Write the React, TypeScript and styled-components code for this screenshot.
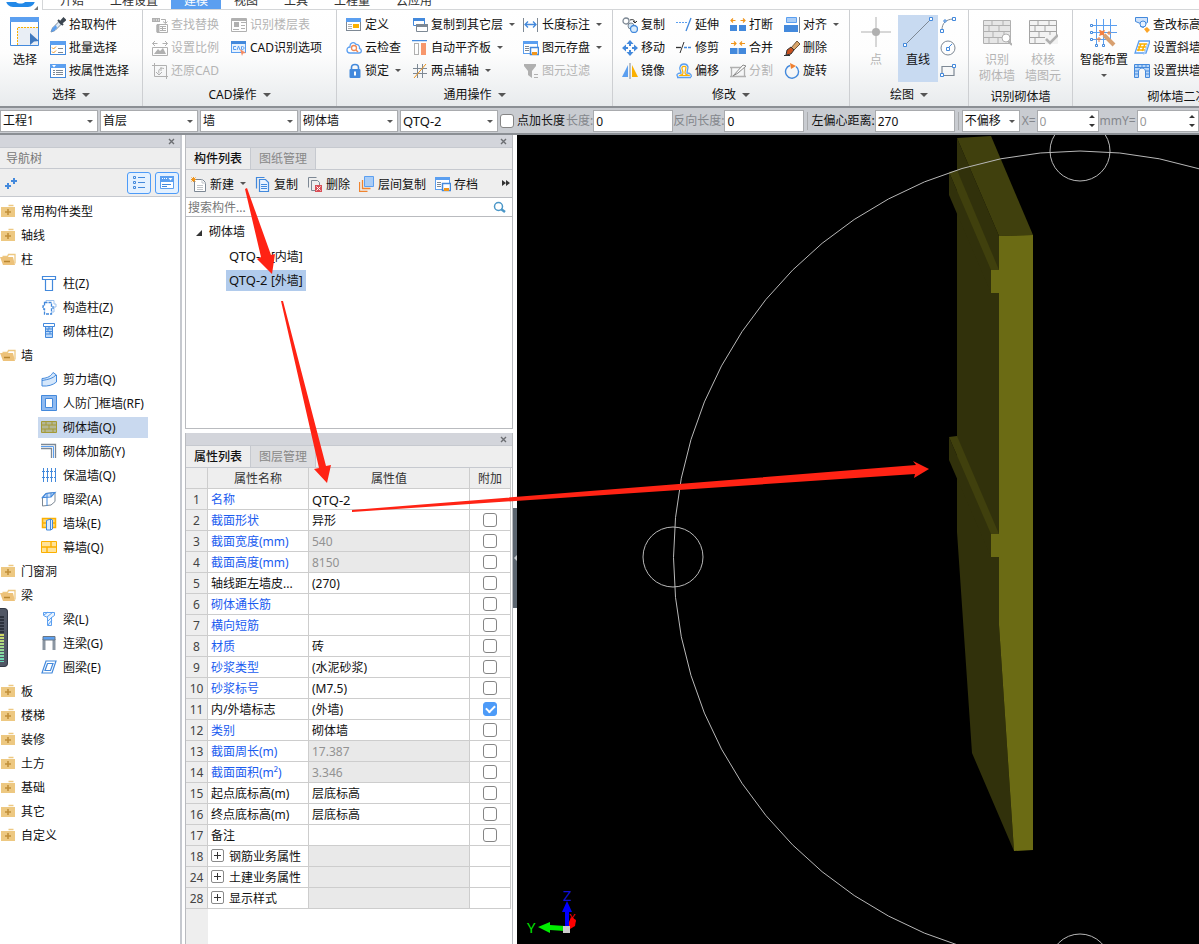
import React from 'react';
import styled, { createGlobalStyle, css } from 'styled-components';

const GlobalStyle = createGlobalStyle`
  * { box-sizing: border-box; }
  html, body { margin: 0; background: #fff; }
  body, button, input, select, table {
    font-family: "Noto Sans", "Noto Sans CJK SC", sans-serif;
    font-size: 12px;
    line-height: 16px;
    color: #111;
  }
  button { border: 0; background: none; padding: 0; margin: 0; text-align: left; white-space: nowrap; }
  input, select { margin: 0; border-radius: 0; }
`;

const B = '#4389dc';
const L = '#5b9ff0';
const P = '#cfe2fa';
const G = '#b0b0b0';
const D = '#7d8894';
const O = '#f0951c';
const Y = '#fbb000';

/* ---------- icons ---------- */

const s = (c: string, w = 1) => ({ fill: 'none', stroke: c, strokeWidth: w });

const icons: Record<string, React.ReactNode> = {
  pick: <><path d="M1 15l1.500-4L9 4.500 11.500 7 5 13.500z" fill="#dfeaf5" stroke={D} /><path d="M1 15l1.500-4L6 8l1 3-3 3z" fill={L} /><path d="M8 3l5 5M10 5.500l3.500-4 1.500 1.500-4 3.500z" stroke="#3c4650" strokeWidth="2" fill="#3c4650" /></>,
  batch: <><rect x=".5" y="1.500" width="15" height="13" fill="#fff" stroke={B} /><path d="M0 1h16v4H0z" fill={L} /><path d="M2 7.500l1.500 1.500L6 6.500M2 11.500L3.500 13 6 10.500" {...s(O)} /><path d="M8 8.500h5M8 12.500h5" {...s(D)} /></>,
  prop: <><rect x=".5" y="1.500" width="15" height="13" fill="#fff" stroke={B} /><path d="M0 1h16v4H0z" fill={L} /><path d="M2 2h4L4 4.500z" fill="#fff" /><path d="M3 7.500h2M6 7.500h7M3 9.500h2M6 9.500h7M3 11.500h2M6 11.500h7" {...s(D)} /></>,
  replace: <><path d="M0 1h8v4H0z" fill={G} /><path d="M1.500 3h1M4 3h1M6 3h1" stroke="#fff" /><path d="M9 2.500h4.500V6M11 4.500l2.500 2 2-2" {...s(G)} /><path d="M5 7.500h10.500v8H5z" {...s(G)} /><path d="M5 8h2v7H5zM8 9.500h6M8 11.500h6M8 13.500h6M10.500 9v5" fill={G} stroke={G} /></>,
  scale: <><path d="M.5 3.500h5M3 1L.5 3.500 3 6M15.500 3.500h-5M13 1l2.500 2.500L13 6M.5 7.500h15v8H.500z" {...s(G)} /><path d="M2 14l4-5 2 2 3-3 3 6z" fill={G} /></>,
  restore: <><path d="M2.500 0v13.500H16M0 2.500h14.500V16M12 5.500c-4-1-6 1-5 5M4 9l3 3 3-3M9 4v4" {...s(G)} /></>,
  floorTable: <><path d="M.5 1.500h15v13H.500zM10 5.500h5M10 8.500h4M10 11.500h4M2 12.500h6" {...s(G)} /><path d="M1 2h14v2H1zM3 5h5v5H3z" fill={G} /></>,
  cadOpt: <><rect x=".5" y="1.500" width="14" height="11" fill="#e8f2fd" stroke={L} /><path d="M0 1h15v3H0z" fill={B} /><path d="M5 6.500H2.500v3H5M6 10l1.500-4L9 10M10.500 6.500v3h1c2 0 2-3 0-3z" {...s(L)} /><path d="M9 9l6 4-3 .5L11 16z" fill="#f58b63" /></>,
  define: <><rect x=".5" y="1.500" width="14" height="12" fill="#fff" stroke={D} /><path d="M0 1h15v4H0z" fill={L} /><path d="M2 7.500h4M2 9.500h4M2 11.500h4" {...s(G)} /><path d="M7 7h6v4H7z" fill={Y} /></>,
  cloud: <><path d="M4 13h9c3 0 3-4 .5-4.500C14 5 11 4 10 4.500 8 1 3.500 3 4 7c-4 0-4 6 0 6z" fill="#fff" stroke={L} strokeWidth="1.300" /><circle cx="8" cy="8" r="2.500" {...s('#ee8855', 1.3)} /><path d="M10 10l2 2" stroke="#ee8855" strokeWidth="1.500" /></>,
  lock: <><path d="M5.500 7V4.500c0-4 7-4 7 0V7" {...s(B, 1.6)} /><rect x="3.500" y="6" width="11" height="9" rx="1" fill={B} /><path d="M9 8.500v4" stroke="#fff" strokeWidth="2" /></>,
  copyFloor: <><path d="M1.500 1.500h11v7h-11z" fill="#fff" stroke={B} /><path d="M1 1h12v3H1z" fill={B} /><path d="M4.500 7.500h11v7h-11z" fill="#fff" stroke={D} /><path d="M4 7h12v3H4z" fill={D} /></>,
  flat: <><path d="M0 .5h15" stroke={B} strokeWidth="1.500" /><rect x="2.500" y="3.500" width="4" height="11" {...s(G)} /><rect x="9" y="3" width="5" height="12" fill="#f7976c" /></>,
  aux: <><path d="M5.500 1v14M10.500 1v14M1 5.500h14M1 10.500h14" {...s(D)} /><path d="M2 15L14 1" stroke={O} /></>,
  length: <><path d="M.5 1v14M14.500 1v14" {...s(D)} /><path d="M2 7.500h11M5 4.500l-3 3 3 3M10 4.500l3 3-3 3" {...s(B, 1.3)} /></>,
  save: <><rect x=".5" y="1.500" width="14" height="12" fill="#fff" stroke={L} /><path d="M0 1h15v3H0z" fill={L} /><path d="M2 6.500h4M2 8.500h4M2 10.500h4" {...s(D)} /><path d="M7.500 7.500h8v7h-8z" fill="#fff" stroke={B} strokeWidth="1.500" /><path d="M9 12h5v3H9z" fill={O} /></>,
  filter: <><path d="M1 1h12v2L9 8v7l-4-3V8L1 3z" fill={G} /><path d="M11 11.500h4M11 14.500h4" {...s(G)} /></>,
  copy: <><circle cx="4" cy="4" r="3" fill="#fff" stroke={D} strokeWidth="1.300" /><path d="M8 3c3-1 5 0 5 3M11 4l2 2 2-2" {...s('#333')} /><circle cx="9" cy="9" r="3" fill="#cfe5f8" stroke={D} /><circle cx="12" cy="12" r="3.500" fill="#d8ebfb" stroke={B} strokeWidth="1.300" /></>,
  move: <><path d="M8 0l3.500 4h-2.500v2h-2V4H4.500zM8 16l3.500-4h-2.500v-2h-2v2H4.500zM0 8l4-3.500v2.500h2v2H4v2.500zM16 8l-4-3.500v2.500h-2v2h2v2.500z" fill={B} /></>,
  mirror: <><path d="M6 2v12H0z" fill={L} /><path d="M10 2v12h6z" fill={Y} /><path d="M8 0v16" {...s(D)} /></>,
  extend: <><path d="M0 5.500h11" stroke={L} strokeDasharray="2 1" /><path d="M15 1l-5 13" {...s(B, 1.3)} /></>,
  trim: <><path d="M0 7.500h5" {...s('#333', 1.3)} /><path d="M8 7.500h8" stroke={B} strokeDasharray="3 1" strokeWidth="1.500" /><path d="M8 2L4 13" {...s('#333')} /></>,
  offset: <><path d="M1 14.500h14M2 14c-2-2-1-4 3-4 0-2-2-4-1-6 1-4 7-4 8 0 0 2-1 4-1 6 3 0 5 2 4 4" {...s(L, 1.3)} /><path d="M4 12.500c1-1 3 0 3-2.500S5.500 6 6 4.500c1-2 4-1 4 0S9 8 9 10s3 1.500 4 2.500z" {...s(Y, 1.2)} /></>,
  break: <><path d="M0 8h7v6H0zM9 8h7v6H9z" fill={B} /><path d="M5.500 3.500H1M3 1.500l-2 2 2 2M10.500 3.500H15M13 1.500l2 2-2 2" {...s(O, 1.2)} /></>,
  merge: <><path d="M0 8h16v6H0z" fill={B} /><path d="M8 8v6" stroke="#fff" /><path d="M1 3.500h5M4 1.500l2 2-2 2M15 3.500h-5M12 1.500l-2 2 2 2" {...s(O, 1.2)} /></>,
  split: <><path d="M1.500 4.500h13v9h-13zM0 4.500h4M0 13.500h16" {...s(G, 1.3)} /><path d="M3 13L13 2l3 1L8 10z" fill="#fff" stroke="#8a8a8a" /></>,
  align: <><path d="M2.500.5h10v5h-10z" fill="#a9cdf7" stroke={L} /><path d="M0 8h14v7H0z" fill={B} /><path d="M15.500 0v16" {...s(D)} /></>,
  erase: <><path d="M7 8l6-7 3 3-6 6z" fill="#d9a56b" stroke="#70563a" /><path d="M3 10l4-3 3 3-3 4-5 1z" fill="#c8501e" stroke="#333" /><path d="M0 15.500h6" {...s('#333')} /></>,
  rotate: <><path d="M12 3.500A6.500 6.500 0 1 1 6 2.500" {...s(B, 1.4)} /><path d="M6 0l6 3-5 3z" fill="#f08030" /></>,
  arc: <><path d="M2 13C2 6 6 2.500 13 2" {...s(D)} /><path d="M.5 12.500h3v3h-3zM12.500.5h3v3h-3zM4 3h2v2H4z" fill="#fff" stroke={B} /></>,
  circle: <><circle cx="8" cy="8" r="7" {...s(D)} /><path d="M8 8l4-4" {...s(B)} /><path d="M6.500 7.500h3v3h-3z" fill="#fff" stroke={B} /></>,
  rect: <><path d="M2 3.500h12v9H2z" {...s(D, 1.2)} /><path d="M.5 10.500h3v3h-3zM12.500 1.500h3v3h-3z" fill="#fff" stroke={B} /></>,
  elev: <><path d="M1.500.5h12v5l-4 2v3l-3-1v-3l-5-2z" fill={P} stroke={B} /><circle cx="9" cy="7" r="3" fill="#e4f0ff" stroke={B} /><path d="M10 12l3-2 3 3-3 3z" fill="#fba528" /></>,
  slant: <><path d="M5 1h11l-4 12H1z" fill="#fff" stroke={L} strokeWidth="1.300" /><path d="M5 4h8M4 7h8M3 10h8M7 4L4 11M11 4L8 11" stroke={Y} strokeWidth="1.500" /><path d="M13 4l2-2-4 12-2 1" fill="#a9cdf7" /></>,
  arch: <><path d="M.5 1.500h15v13h-4V8c-1-4-6-4-7 0v6.500h-4z" fill="#b7d5f8" stroke={B} /><path d="M1 4.500h14M4 1v3M8 1v3M12 1v3M1 8h3M12 8h3M1 11h3M12 11h3" {...s(B)} /></>,
  folderPlus: <><path d="M8.500 2.500h5" stroke="#edc881" strokeWidth="1.500" /><path d="M1 4h14v10H1z" fill="#edc881" /><path d="M8 6v6M5 9h6" stroke="#c08f3a" strokeWidth="1.600" /></>,
  folderOpen: <><path d="M2.500 5.500h5l1-2h6.500v9" {...s('#edc881', 1.3)} /><path d="M0 6h13l2 8H3z" fill="#edc27a" /><path d="M4 10.500h6" stroke="#b98730" strokeWidth="1.500" /></>,
  column: <><path d="M1.500 1.500h13v3h-13zM4.500 4.500v11h7v-11" fill="#fff" stroke={B} strokeWidth="1.200" /></>,
  structCol: <><path d="M5 3V1.500h8V5h2v3h-2v5h-2" {...s('#9fc3ee')} /><path d="M3.500 3.500h7V7h1.500v3h-1.500v5h-7v-5H2V7h1.500z" fill="#fff" stroke={B} strokeWidth="1.300" strokeDasharray="3 1" /></>,
  brickCol: <><path d="M2.500.5h11v3h-11z" fill="#fff" stroke={B} /><path d="M4.500 3.500h7v11h-7z" fill="#bcd8f8" stroke={B} /><path d="M5 6h6M5 8.500h6M5 11h6M8 4v2M7 6v3M9 9v2" {...s(B)} /></>,
  shearWall: <><path d="M1 7.500C7 7 10 5 12 1.500L15.500 4v7C12 14 7 15.500 1 15z" fill="#d5e7fb" stroke={B} /><path d="M1 9.500c6-1 11-2 14-5.500" {...s(B)} /></>,
  door: <><path d="M.5.5h15v15H.500z" fill="#8fbaf0" stroke={B} /><path d="M4.500 3.500h7v9h-7z" fill="#fff" stroke={B} /></>,
  brick: <><path d="M.5 2.500h15v11H.500z" fill="#b4b795" stroke="#a49a36" /><path d="M1 6h14M1 10h14M5 3v3M11 3v3M8 6v4M4 10v3M12 10v3" {...s('#a49a36')} /></>,
  rebar: <><path d="M0 1.500h14.500V15M0 5.500h10.500V15" {...s(D, 1.3)} /><path d="M0 3.500h12.500V15" {...s(L)} /></>,
  insul: <><path d="M2.500 1v14M6.500 1v14M10.500 1v14M14.500 1v14" {...s(B)} /><path d="M1 4.500h14M1 10.500h14" stroke={B} strokeDasharray="1 1" /></>,
  hidden: <><path d="M1.500 6.500L5 2.500l9-1v9L10 14l-8.500 1z" fill="#fff" stroke={D} /><path d="M1.500 6.500L5 2.500l9-1L10 6z" fill={P} stroke={B} strokeWidth="1.200" /><path d="M6 2.500v4M10 2v4M6 6.500V15" {...s(B)} /></>,
  pier: <><path d="M1.500 3.500h13v9h-13z" fill="#ffd978" stroke={Y} strokeWidth="1.500" /><path d="M2 8h12" stroke={Y} strokeWidth="1.500" /><path d="M5.500 5.500l4-1.500 2 1v9l-2 1h-4z" fill="#dcecff" stroke={B} /><path d="M9.500 4v11" {...s(B)} /></>,
  curtain: <><path d="M.5 2.500h15v11H.500z" fill="#ffe39a" stroke={Y} /><path d="M1 8h14M10 3v5M6 8v5" stroke={Y} strokeWidth="1.400" /></>,
  beam: <><path d="M2.500 1.500h11v3l-3 2v8h-4v-8l-4-2z" fill="#e8f3ff" stroke={L} /><path d="M3 4l4-3M6 6l6-5M7 14l4-5M7 10l4-4" {...s(L)} /></>,
  linkBeam: <><path d="M3 4v11M13 4v11" stroke="#8b96a2" strokeWidth="3" /><path d="M2 1.500h12V5H2z" fill={L} stroke="#6c7681" /></>,
  ringBeam: <path d="M5 2h10l-4 12H1zM6.500 4.500L4 11.500h5.500l2.500-7z" fill="#fff" stroke={B} strokeWidth="1.200" />,
  newDoc: <><path d="M3.500 3.500h8l3 3v9h-11z" fill="#fff" stroke={D} /><path d="M11 3v4h4M6 9.500h6M6 11.500h6M6 13.500h6" {...s('#c0c4c8')} /><path d="M.5 1.500l4 4M4.500 1.500l-4 4M2.500 1v5M0 3.500h5" stroke={O} /></>,
  copyDoc: <><path d="M1.500 12.500v-11h8" {...s(B, 1.2)} /><path d="M4.500 3.500h6l3 3v9h-9z" fill="#e8f3ff" stroke={B} strokeWidth="1.200" /><path d="M6 8.500h6M6 10.500h6M6 12.500h6" {...s(B)} /></>,
  delDoc: <><path d="M1.500 11.500v-10h8M4.500 4.500h6l2 2v8h-8z" {...s(D)} /><path d="M8 9h7v7H8z" fill="#d94f57" /><path d="M9.500 10.500l4 4M13.500 10.500l-4 4" stroke="#fff" /></>,
  layerCopy: <><path d="M.5 6v9.500h8M3.500 4v8.500h8" {...s('#ef8430', 1.3)} /><path d="M5.500.5h9v10h-9z" fill="#a9cdf7" stroke={L} /></>,
  search: <><circle cx="6.500" cy="7.500" r="4" {...s('#4b97c8', 1.5)} /><path d="M9 10l4 3" stroke="#4b97c8" strokeWidth="2.500" /></>,
  sort: <path d="M5 8v6M2 11h6M11 3v6M8 6h6" stroke={B} strokeWidth="2" />,
  list: <><path d="M2.500 1.500h2v2h-2zM2.500 6.500h2v2h-2zM2.500 11.500h2v2h-2zM7 2.500h7M7 7.500h7M7 12.500h7" {...s(B)} /></>,
  card: <><path d="M1.500 2.500h13v11h-13z" fill="#fff" stroke={L} /><path d="M1 1h14v6H1z" fill={L} /><path d="M3 9.500h9M3 11.500h5" {...s(B)} /><path d="M9.500 3h4l-2 2.500z" fill="#fff" /><path d="M3 3.500h1M5 3.500h1M7 3.500h1" stroke="#fff" /></>,
};

const bigIcons: Record<string, React.ReactNode> = {
  select: <><path d="M.500.5h28v28H.500z" fill="#fff" stroke={B} /><path d="M0 0h29v5H0z" fill={L} /><path d="M7 10h21v18H7z" fill="#e9eef5" /><path d="M7.500 28V10.500H28" stroke={Y} fill="none" strokeDasharray="2 1" /><path d="M20 16l9 8-5 .5-4 3.500z" fill="#3f78be" /></>,
  point: <><path d="M15 0v30M0 15h30" {...s(G)} /><circle cx="15" cy="15" r="4" fill={G} /></>,
  line: <><path d="M3 27L27 3" {...s(D)} /><path d="M.5 26.500h3v3h-3zM26.500.5h3v3h-3z" fill="#fff" stroke={B} /></>,
  wallScan: <><path d="M1.500 3.500h27v23h-27z" fill="#e6e6e6" stroke={G} /><path d="M2 8.500h26M2 14.500h26M2 20.500h26M10 4v4M21 4v4M7 9v5M17 9v5M11 15v5M22 15v5M7 21v5M16 21v5" {...s(G)} /><circle cx="24" cy="21" r="4" fill="#fff" stroke={G} /><path d="M26 24l4 4" stroke={G} strokeWidth="2" /></>,
  wallCheck: <><path d="M1.500 3.500h27v23h-27z" fill="#f3f3f3" stroke="#a4a4a4" /><path d="M2 8.500h26M2 14.500h26M2 20.500h26M10 4v4M21 4v4M7 9v5M17 9v5M11 15v5M22 15v5M7 21v5" {...s('#a4a4a4')} /><path d="M17 18h13v9H17z" fill="#f3f3f3" /><path d="M18 22l4 4 8-8" {...s(G, 2.5)} /></>,
  smart: <><path d="M7.500 2v27M14.500 2v27M21.500 2v24M28 8.500H1M28 15.500H1M20 22.500H1" {...s(L)} /><path d="M1.500 7.500h2v2h-2zM1.500 14.500h2v2h-2zM1.500 21.500h2v2h-2zM6.500 27.500h2v2h-2zM13.500 27.500h2v2h-2z" fill="#fff" stroke={B} /><path d="M11 13l2 1 3-1-1 3 1 3-3-1-3 1 1-3-1-3z" fill="#f58040" /><path d="M15 18l10 10" stroke="#d8a070" strokeWidth="4" /><path d="M20 14v4M18 16h4M10 20v5M7 22h5" stroke="#f0803a" /></>,
};

const Glyph = styled.svg<{ $size?: number }>`
  width: ${p => p.$size ?? 16}px;
  height: ${p => p.$size ?? 16}px;
  flex: none;
  display: block;
`;
const Icon = ({ name }: { name: string }) => <Glyph viewBox="0 0 16 16" aria-hidden="true">{icons[name]}</Glyph>;
const BigIcon = ({ name }: { name: string }) => <Glyph $size={30} viewBox="0 0 30 30" aria-hidden="true">{bigIcons[name]}</Glyph>;

const Caret = styled.i<{ $big?: boolean }>`
  border: ${p => (p.$big ? 4 : 3)}px solid transparent;
  border-top-color: #555;
  border-bottom-width: 0;
  margin-left: 3px;
  flex: none;
`;
const Label = styled.span` padding-top: 2px; `;
const Code = styled.span` font-size: 13px; `;

/* ---------- ribbon ---------- */

const Page = styled.div`
  display: flex;
  flex-direction: column;
  min-height: 100vh;
  position: relative;
  overflow: hidden;
`;
const MenuBar = styled.header`
  display: flex;
  align-items: flex-end;
  height: 10px;
  overflow: hidden;
`;
const AppMenu = styled.button`
  width: 42px;
  height: 10px;
  flex: none;
`;
const MenuTabs = styled.nav`
  display: flex;
  align-items: flex-end;
  flex: 1;
  padding-left: 4px;
  border-bottom: 1px solid #d4d6d8;
  border-left: 1px solid #d4d6d8;
  height: 10px;
`;
const MenuTab = styled.button<{ $active?: boolean }>`
  padding: 0 13px;
  height: 17px;
  flex: none;
  background: ${p => (p.$active ? L : 'none')};
  color: ${p => (p.$active ? '#fff' : '#333')};
`;
const Ribbon = styled.div`
  display: flex;
  height: 96px;
  overflow: hidden;
  background: linear-gradient(#fff 0%, #fdfdfd 45%, #e8ebed 100%);
`;
const Group = styled.section<{ $w: number }>`
  width: ${p => p.$w}px;
  flex: none;
  display: flex;
  flex-direction: column;
  padding: 3px 0 0;
  border-right: 1px solid #cdcfd2;
`;
const GroupBody = styled.div<{ $pad: number; $gap?: number }>`
  display: flex;
  height: 69px;
  padding-left: ${p => p.$pad}px;
  gap: ${p => p.$gap ?? 0}px;
`;
const GroupTitle = styled.button<{ $low?: boolean }>`
  display: flex;
  align-items: center;
  justify-content: center;
  gap: 3px;
  height: 24px;
  padding-top: ${p => (p.$low ? 6 : 2)}px;
  flex: none;
`;
const Commands = styled.div<{ $cols: string }>`
  display: grid;
  grid-template-columns: ${p => p.$cols};
  grid-template-rows: repeat(3, 23px);
  grid-auto-flow: column;
`;
const Command = styled.button`
  display: flex;
  align-items: center;
  gap: 3px;
  &:disabled { color: #b4b4b4; }
`;
const BigCommand = styled.button<{ $w: number; $active?: boolean }>`
  display: flex;
  flex-direction: column;
  align-items: center;
  width: ${p => p.$w}px;
  flex: none;
  padding-top: 2px;
  height: 67px;
  margin-top: 2px;
  text-align: center;
  background: ${p => (p.$active ? '#c8daf1' : 'none')};
  &:disabled { color: #b4b4b4; }
  svg { margin-bottom: 5px; }
  i { margin: 6px 0 0; }
`;

type Cmd = [icon: string, label: string, caret?: boolean, off?: boolean];
const CommandGrid = ({ cols, items }: { cols: string; items: Cmd[] }) => (
  <Commands $cols={cols}>
    {items.map(([icon, label, caret, off]) => (
      <Command key={label} disabled={off}>
        <Icon name={icon} />{label}{caret && <Caret />}
      </Command>
    ))}
  </Commands>
);

/* ---------- option bar ---------- */

const OptionBar = styled.form`
  display: flex;
  align-items: center;
  height: 29px;
  padding-top: 1px;
  flex: none;
  overflow: hidden;
  background: #c9ccd1;
  border-top: 2px solid #8b8f94;
  border-bottom: 2px solid #8b8f94;
  white-space: nowrap;
`;
const SelectBox = styled.div<{ $w: number; $code?: boolean }>`
  position: relative;
  width: ${p => p.$w}px;
  margin-right: 2px;
  flex: none;
  display: flex;
  align-items: center;
  i { position: absolute; right: 5px; pointer-events: none; }
  select {
    width: 100%;
    height: 22px;
    padding: 0 2px;
    border: 1px solid #a9abae;
    background: #fff;
    appearance: none;
    font-size: ${p => (p.$code ? 13 : 12)}px;
  }
`;
const Field = styled.label<{ $muted?: boolean }>`
  display: flex;
  align-items: center;
  color: ${p => (p.$muted ? '#84878c' : '#111')};
  flex: none;
`;
const CheckField = styled(Field)`
  gap: 3px;
  margin-right: 1px;
`;
const TextInput = styled.input<{ $w: number }>`
  width: ${p => p.$w}px;
  height: 22px;
  padding: 0 2px;
  border: 1px solid #a9abae;
  background: #fff;
  &:disabled { color: #999; }
`;
const Divider = styled.span`
  width: 1px;
  height: 18px;
  margin: 0 3px;
  background: #a9abae;
  flex: none;
`;
const Spin = styled.span`
  position: relative;
  display: flex;
  margin: 0 1px;
  svg { position: absolute; right: 3px; top: 4px; }
`;
const Check = styled.input`
  appearance: none;
  width: 14px;
  height: 14px;
  border: 1px solid #858585;
  border-radius: 3px;
  background: #fff;
  display: inline-flex;
  align-items: center;
  justify-content: center;
  vertical-align: middle;
  flex: none;
  &:checked { background: #4d9bf8; border-color: #4d9bf8; }
  &:checked::after {
    content: '';
    width: 7px;
    height: 4px;
    border: solid #fff;
    border-width: 0 0 2px 2px;
    transform: translateY(-1px) rotate(-45deg);
  }
`;

const Drop = ({ label, w, value, code }: { label: string; w: number; value: string; code?: boolean }) => (
  <SelectBox $w={w} $code={code}><select aria-label={label} defaultValue={value}><option>{value}</option></select><Caret /></SelectBox>
);
const SpinBox = ({ label }: { label: string }) => (
  <Field $muted>{label}
    <Spin><TextInput $w={62} defaultValue="0" disabled />
      <svg width="8" height="14" aria-hidden="true"><path d="M1 4l3-3 3 3zM1 10l3 3 3-3z" fill="#333" /></svg>
    </Spin>
  </Field>
);

/* ---------- panels ---------- */

const Main = styled.main`
  display: flex;
  flex: 1;
`;
const NavPanel = styled.aside`
  position: relative;
  width: 182px;
  flex: none;
  border-right: 2px solid #c6c9cf;
  background: #fff;
`;
const CloseBar = styled.div`
  display: flex;
  justify-content: flex-end;
  align-items: center;
  height: 13px;
  padding-right: 5px;
  background: #d3d5db;
  border-bottom: 1px solid #c6c9cf;
  flex: none;
  button { display: flex; }
`;
const Close = () => (
  <button type="button" aria-label="关闭"><svg width="7" height="7"><path d="M1 1l5 5M6 1L1 6" stroke="#6c6e72" strokeWidth="1.400" /></svg></button>
);
const NavHeading = styled.h2`
  margin: 0;
  padding: 3px 6px 0;
  height: 21px;
  font-size: 12px;
  font-weight: 400;
  color: #777;
  background: #eee;
  border-bottom: 1px solid #c6c9cf;
`;
const NavTools = styled.div`
  display: flex;
  align-items: center;
  gap: 4px;
  height: 28px;
  padding: 0 1px 0 3px;
  background: #eee;
  border-bottom: 1px solid #c6c9cf;
`;
const Spacer = styled.span` flex: 1; `;
const Toggle = styled.button`
  display: flex;
  align-items: center;
  justify-content: center;
  width: 24px;
  height: 22px;
  border: 1px solid #4d9bf8;
  border-radius: 3px;
  background: #e4f1ff;
`;
const Tree = styled.ul`
  list-style: none;
  margin: 0;
  padding: 2px 0 0;
`;
const TreeRow = styled.li`
  height: 24px;
  display: flex;
  align-items: center;
`;
const FolderButton = styled.button`
  display: flex;
  align-items: center;
  gap: 5px;
`;
const LeafButton = styled.button<{ $active?: boolean }>`
  display: flex;
  align-items: center;
  gap: 6px;
  height: 21px;
  min-width: 110px;
  margin-left: 38px;
  padding: 0 3px;
  background: ${p => (p.$active ? '#c9d9ef' : 'none')};
`;
const Meter = styled.div`
  position: absolute;
  left: 0;
  top: 473px;
  width: 8px;
  height: 59px;
  border-radius: 0 4px 4px 0;
  border: 1px solid #333845;
  border-left: 0;
  background: #515765;
  &::before {
    content: '';
    position: absolute;
    left: 0;
    top: 7px;
    width: 4px;
    height: 46px;
    background: repeating-linear-gradient(transparent 0 2px, #515765 2px 3px),
      linear-gradient(#2c313c 0 18px, #d5d863 18px, #63d8ba);
  }
`;

const Dock = styled.div`
  display: flex;
  flex-direction: column;
  width: 328px;
  margin-left: 3px;
  flex: none;
`;
const Panel = styled.section<{ $grow?: boolean }>`
  display: flex;
  flex-direction: column;
  border: solid #b9bbbf;
  border-width: 0 1px ${p => (p.$grow ? 0 : 1)}px 1px;
  margin-bottom: ${p => (p.$grow ? 0 : 4)}px;
  height: ${p => (p.$grow ? 'auto' : '294px')};
  flex: ${p => (p.$grow ? '1' : 'none')};
`;
const Tabs = styled.div`
  display: flex;
  height: 22px;
  flex: none;
  background: #eee;
  border-bottom: 1px solid #c6c9cf;
`;
const Tab = styled.button<{ $active?: boolean }>`
  width: 65px;
  padding-top: 1px;
  text-align: center;
  border-right: 1px solid #c6c9cf;
  ${p => p.$active
    ? css`font-weight: 500; color: #111;`
    : css`background: #dcdde0; color: #888;`}
`;
const Tools = styled.div`
  display: flex;
  align-items: center;
  gap: 9px;
  height: 28px;
  padding: 0 2px 0 5px;
  flex: none;
  background: #eee;
  border-bottom: 1px solid #b9bbbf;
`;
const SearchRow = styled.label`
  display: flex;
  align-items: center;
  height: 19px;
  padding-right: 4px;
  border-bottom: 1px solid #b9bbbf;
  flex: none;
  input { flex: 1; min-width: 0; border: 0; padding: 2px 2px 0; background: none; outline: 0; }
  input::placeholder { color: #777; opacity: 1; }
`;
const ItemList = styled(Tree)` padding-top: 3px; `;
const RootButton = styled.button`
  display: flex;
  align-items: center;
  gap: 7px;
  padding-left: 9px;
`;
const ItemButton = styled.button<{ $active?: boolean }>`
  height: 21px;
  margin-left: 40px;
  padding: 0 3px;
  background: ${p => (p.$active ? '#b1cbec' : 'none')};
`;

const TableArea = styled.div`
  flex: 1;
  background: linear-gradient(to right, #eee 22px, #fff 22px);
`;
const PropTable = styled.table`
  width: 325px;
  table-layout: fixed;
  border-collapse: separate;
  border-spacing: 0;
  th, td {
    height: 21px;
    padding: 2px 3px 0;
    border: solid #cdcdcd;
    border-width: 0 1px 1px 0;
    text-align: left;
    font-weight: 400;
    white-space: nowrap;
    overflow: hidden;
  }
  thead th { background: #eee; text-align: center; color: #333; }
  tbody th { background: #eee; text-align: center; padding: 2px 0 0; color: #444; }
  td:last-child { text-align: center; line-height: 14px; padding: 0; }
`;
const NameCell = styled.td<{ $blue: boolean }>` color: ${p => (p.$blue ? '#1a5cf0' : '#111')}; `;
const ValueCell = styled.td<{ $muted: boolean }>`
  color: #111;
  ${p => p.$muted && css`background: #e9e9e9; color: #929292;`}
`;
const Expander = styled.button`
  display: inline-flex;
  align-items: center;
  justify-content: center;
  width: 13px;
  height: 13px;
  margin: 0 5px 0 0;
  border: 1px solid #8a8a8a;
  border-radius: 2px;
  vertical-align: -1px;
`;
const GroupName = styled.div`
  display: flex;
  align-items: flex-start;
  height: 16px;
`;

const Viewport = styled.div`
  position: relative;
  flex: 1;
  min-width: 0;
  margin-left: 4px;
  background: #000;
`;
const Scene = styled.svg`
  position: absolute;
  inset: 0;
  width: 100%;
  height: 100%;
`;
const Splitter = styled.button`
  position: absolute;
  left: -4px;
  top: 373px;
  width: 4px;
  height: 100px;
  background: #5c6670;
`;
const Annotations = styled.svg`
  position: absolute;
  left: 0;
  top: 0;
  width: 100%;
  height: 100%;
  pointer-events: none;
`;

/* ---------- data ---------- */

type Node = { label: string; leaves?: [icon: string, label: string][] };
const tree: Node[] = [
  { label: '常用构件类型' },
  { label: '轴线' },
  { label: '柱', leaves: [['column', '柱(Z)'], ['structCol', '构造柱(Z)'], ['brickCol', '砌体柱(Z)']] },
  { label: '墙', leaves: [['shearWall', '剪力墙(Q)'], ['door', '人防门框墙(RF)'], ['brick', '砌体墙(Q)'], ['rebar', '砌体加筋(Y)'], ['insul', '保温墙(Q)'], ['hidden', '暗梁(A)'], ['pier', '墙垛(E)'], ['curtain', '幕墙(Q)']] },
  { label: '门窗洞' },
  { label: '梁', leaves: [['beam', '梁(L)'], ['linkBeam', '连梁(G)'], ['ringBeam', '圈梁(E)']] },
  { label: '板' }, { label: '楼梯' }, { label: '装修' }, { label: '土方' }, { label: '基础' }, { label: '其它' }, { label: '自定义' },
];

type Prop = { n: number; name: string; value?: string; blue?: boolean; muted?: boolean; group?: boolean };
const props: Prop[] = [
  { n: 1, name: '名称', value: 'QTQ-2', blue: true },
  { n: 2, name: '截面形状', value: '异形', blue: true },
  { n: 3, name: '截面宽度(mm)', value: '540', blue: true, muted: true },
  { n: 4, name: '截面高度(mm)', value: '8150', blue: true, muted: true },
  { n: 5, name: '轴线距左墙皮...', value: '(270)' },
  { n: 6, name: '砌体通长筋', blue: true },
  { n: 7, name: '横向短筋', blue: true },
  { n: 8, name: '材质', value: '砖', blue: true },
  { n: 9, name: '砂浆类型', value: '(水泥砂浆)', blue: true },
  { n: 10, name: '砂浆标号', value: '(M7.5)', blue: true },
  { n: 11, name: '内/外墙标志', value: '(外墙)' },
  { n: 12, name: '类别', value: '砌体墙', blue: true },
  { n: 13, name: '截面周长(m)', value: '17.387', blue: true, muted: true },
  { n: 14, name: '截面面积(m²)', value: '3.346', blue: true, muted: true },
  { n: 15, name: '起点底标高(m)', value: '层底标高' },
  { n: 16, name: '终点底标高(m)', value: '层底标高' },
  { n: 17, name: '备注' },
  { n: 18, name: '钢筋业务属性', muted: true, group: true },
  { n: 24, name: '土建业务属性', muted: true, group: true },
  { n: 28, name: '显示样式', muted: true, group: true },
];

/* The orbit ring is drawn as a 64-sided polygon, as the viewer tessellates it. */
const ring = Array.from({ length: 64 }, (_, i) => {
  const a = (i * Math.PI) / 32;
  return `${(1080 + 406.5 * Math.sin(a)).toFixed(1)},${(557.5 - 406.5 * Math.cos(a)).toFixed(1)}`;
}).join(' ');

const WallScene = () => (
  <Scene role="img" aria-label="三维视图">
    <g transform="translate(-517 -135)">
      <polygon points="957,138 999,236 999,625 1014,851 972,753 957,532" fill="#31310b" />
      <polygon points="957,138 991,136 1033,235 999,236" fill="#40400d" />
      <polygon points="949,172 991,270 991,293 949,195" fill="#31310b" />
      <polygon points="949,172 957,170 999,270 991,270" fill="#40400d" />
      <polygon points="949,437 991,534 991,557 949,460" fill="#31310b" />
      <polygon points="949,437 957,436 999,534 991,534" fill="#40400d" />
      <polygon points="999,236 1033,235 1033,850 1014,851 999,625 999,557 991,557 991,534 999,534 999,293 991,293 991,270 999,270" fill="#6b6b14" />
      <polygon points={ring} fill="none" stroke="#b8b8b8" />
      {[[1080, 151], [673, 557], [1080, 964]].map(([x, y]) => (
        <circle key={`${x}-${y}`} cx={x} cy={y} r="30" fill="none" stroke="#b8b8b8" />
      ))}
      <path d="M568 925l3-8 5 3-1 6-5 3z" fill="#f00" />
      <path d="M565 928v-16h-3l5-11 5 11h-3v16z" fill="#00f" />
      <path d="M565 926l-15-1v-3l-12 5 12 6v-3l15 1z" fill="#0e0" />
      <path d="M563 926h7v7h-7z" fill="#ccc" />
      <text x="563" y="901" fontSize="15" fill="#1010d8">Z</text>
      <text x="527" y="933" fontSize="15" fill="#00e000">Y</text>
      <text x="569" y="922" fontSize="11" fill="#f00">X</text>
    </g>
  </Scene>
);

export default function App() {
  return (
    <Page>
      <GlobalStyle />
      <MenuBar>
        <AppMenu aria-label="主菜单">
          <svg width="42" height="10"><rect x="6" y="-20" width="29" height="25" rx="7" fill="#2389e8" /><path d="M16 0c2 2 7 2 9 0z" fill="#fff" /><path d="M38 4v4h-4z" fill="#777" /></svg>
        </AppMenu>
        <MenuTabs>
          {['开始', '工程设置', '建模', '视图', '工具', '工程量', '云应用'].map(t => <MenuTab key={t} $active={t === '建模'}>{t}</MenuTab>)}
        </MenuTabs>
      </MenuBar>

      <Ribbon>
        <Group $w={143}>
          <GroupBody $pad={5} $gap={5}>
            <BigCommand $w={40}><BigIcon name="select" />选择</BigCommand>
            <CommandGrid cols="auto" items={[['pick', '拾取构件'], ['batch', '批量选择'], ['prop', '按属性选择']]} />
          </GroupBody>
          <GroupTitle>选择 <Caret $big /></GroupTitle>
        </Group>
        <Group $w={194}>
          <GroupBody $pad={9}>
            <CommandGrid cols="79px auto" items={[['replace', '查找替换', false, true], ['scale', '设置比例', false, true], ['restore', '还原CAD', false, true], ['floorTable', '识别楼层表', false, true], ['cadOpt', 'CAD识别选项']]} />
          </GroupBody>
          <GroupTitle>CAD操作 <Caret $big /></GroupTitle>
        </Group>
        <Group $w={276}>
          <GroupBody $pad={9}>
            <CommandGrid cols="66px 111px auto" items={[['define', '定义'], ['cloud', '云检查'], ['lock', '锁定', true], ['copyFloor', '复制到其它层', true], ['flat', '自动平齐板', true], ['aux', '两点辅轴', true], ['length', '长度标注', true], ['save', '图元存盘', true], ['filter', '图元过滤', false, true]]} />
          </GroupBody>
          <GroupTitle>通用操作 <Caret $big /></GroupTitle>
        </Group>
        <Group $w={237}>
          <GroupBody $pad={9}>
            <CommandGrid cols="repeat(4, 54px)" items={[['copy', '复制'], ['move', '移动'], ['mirror', '镜像'], ['extend', '延伸'], ['trim', '修剪'], ['offset', '偏移'], ['break', '打断'], ['merge', '合并'], ['split', '分割', false, true], ['align', '对齐', true], ['erase', '删除'], ['rotate', '旋转']]} />
          </GroupBody>
          <GroupTitle>修改 <Caret $big /></GroupTitle>
        </Group>
        <Group $w={119}>
          <GroupBody $pad={6} $gap={2}>
            <BigCommand $w={40} disabled><BigIcon name="point" />点</BigCommand>
            <BigCommand $w={40} $active><BigIcon name="line" />直线</BigCommand>
            <Commands $cols="20px">
              <Command aria-label="弧"><Icon name="arc" /></Command>
              <Command aria-label="圆"><Icon name="circle" /></Command>
              <Command aria-label="矩形"><Icon name="rect" /></Command>
            </Commands>
          </GroupBody>
          <GroupTitle>绘图 <Caret $big /></GroupTitle>
        </Group>
        <Group $w={104}>
          <GroupBody $pad={8} $gap={6}>
            <BigCommand $w={40} disabled><BigIcon name="wallScan" />识别<br />砌体墙</BigCommand>
            <BigCommand $w={40} disabled><BigIcon name="wallCheck" />校核<br />墙图元</BigCommand>
          </GroupBody>
          <GroupTitle $low>识别砌体墙</GroupTitle>
        </Group>
        <Group $w={234}>
          <GroupBody $pad={6} $gap={5}>
            <BigCommand $w={50}><BigIcon name="smart" />智能布置<Caret /></BigCommand>
            <CommandGrid cols="auto" items={[['elev', '查改标高'], ['slant', '设置斜墙'], ['arch', '设置拱墙']]} />
          </GroupBody>
          <GroupTitle $low>砌体墙二次编辑</GroupTitle>
        </Group>
      </Ribbon>

      <OptionBar>
        <Drop label="工程" w={98} value="工程1" />
        <Drop label="楼层" w={98} value="首层" />
        <Drop label="类别" w={98} value="墙" />
        <Drop label="类型" w={98} value="砌体墙" />
        <Drop label="构件" w={98} value="QTQ-2" code />
        <CheckField><Check type="checkbox" />点加长度</CheckField>
        <Field $muted>长度:<TextInput $w={80} defaultValue="0" /></Field>
        <Field $muted>反向长度:<TextInput $w={80} defaultValue="0" /></Field>
        <Divider />
        <Field>左偏心距离:<TextInput $w={80} defaultValue="270" /></Field>
        <Divider />
        <Drop label="偏移方式" w={58} value="不偏移" />
        <SpinBox label="X=" />
        <SpinBox label="mmY=" />
        <Field $muted as="span">mm</Field>
      </OptionBar>

      <Main>
        <NavPanel>
          <CloseBar><Close /></CloseBar>
          <NavHeading>导航树</NavHeading>
          <NavTools>
            <button aria-label="排序"><Icon name="sort" /></button>
            <Spacer />
            <Toggle aria-label="列表视图"><Icon name="list" /></Toggle>
            <Toggle aria-label="卡片视图"><Icon name="card" /></Toggle>
          </NavTools>
          <Tree>
            {tree.map(node => (
              <React.Fragment key={node.label}>
                <TreeRow><FolderButton><Icon name={node.leaves ? 'folderOpen' : 'folderPlus'} /><Label>{node.label}</Label></FolderButton></TreeRow>
                {node.leaves?.map(([icon, label]) => (
                  <TreeRow key={label}><LeafButton $active={icon === 'brick'}><Icon name={icon} /><Label>{label}</Label></LeafButton></TreeRow>
                ))}
              </React.Fragment>
            ))}
          </Tree>
          <Meter />
        </NavPanel>

        <Dock>
          <Panel>
            <CloseBar><Close /></CloseBar>
            <Tabs><Tab $active>构件列表</Tab><Tab>图纸管理</Tab></Tabs>
            <Tools>
              <Command><Icon name="newDoc" /><Label>新建</Label><Caret /></Command>
              <Command><Icon name="copyDoc" /><Label>复制</Label></Command>
              <Command><Icon name="delDoc" /><Label>删除</Label></Command>
              <Command><Icon name="layerCopy" /><Label>层间复制</Label></Command>
              <Command><Icon name="save" /><Label>存档</Label></Command>
              <Spacer />
              <button aria-label="更多"><svg width="8" height="8"><path d="M0 0l4 3-4 3zM4 0l4 3-4 3z" fill="#333" /></svg></button>
            </Tools>
            <SearchRow><input aria-label="搜索构件" placeholder="搜索构件..." /><Icon name="search" /></SearchRow>
            <ItemList>
              <TreeRow><RootButton><svg width="7" height="7"><path d="M7 1v6H1z" fill="#333" /></svg>砌体墙</RootButton></TreeRow>
              <TreeRow><ItemButton><Code>QTQ-1 </Code>[内墙]</ItemButton></TreeRow>
              <TreeRow><ItemButton $active><Code>QTQ-2 </Code>[外墙]</ItemButton></TreeRow>
            </ItemList>
          </Panel>

          <Panel $grow>
            <CloseBar><Close /></CloseBar>
            <Tabs><Tab $active>属性列表</Tab><Tab>图层管理</Tab></Tabs>
            <TableArea>
              <PropTable>
                <colgroup><col width="22" /><col width="101" /><col width="161" /><col width="41" /></colgroup>
                <thead><tr><th aria-label="序号" /><th>属性名称</th><th>属性值</th><th>附加</th></tr></thead>
                <tbody>
                  {props.map(p => (
                    <tr key={p.n}>
                      <th scope="row">{p.n}</th>
                      <NameCell $blue={!!p.blue}>
                        {p.group
                          ? <GroupName><Expander aria-label={`展开${p.name}`}><svg width="7" height="7"><path d="M3.500 0v7M0 3.500h7" stroke="#333" /></svg></Expander>{p.name}</GroupName>
                          : p.name}
                      </NameCell>
                      <ValueCell $muted={!!p.muted}>{p.n === 1 ? <Code>{p.value}</Code> : p.value}</ValueCell>
                      <td>{!p.group && p.n > 1 && <Check type="checkbox" aria-label={p.name} defaultChecked={p.n === 11} />}</td>
                    </tr>
                  ))}
                </tbody>
              </PropTable>
            </TableArea>
          </Panel>
        </Dock>

        <Viewport>
          <WallScene />
          <Splitter aria-label="收起面板"><svg width="4" height="8"><path d="M4 1v6L1 4z" fill="#c8ccd0" /></svg></Splitter>
        </Viewport>
      </Main>

      <Annotations aria-hidden="true">
        <g fill="#ff2314">
          <path d="M245 189L247 188 271 255 275 254 272 274 257 259 261 257z" />
          <path d="M281 301L283 301 326 466 331 465 327 483 314 469 319 468z" />
          <path d="M352 510L916 465 913 461 929 469 914 478 915 474 352 512z" />
        </g>
      </Annotations>
    </Page>
  );
}
